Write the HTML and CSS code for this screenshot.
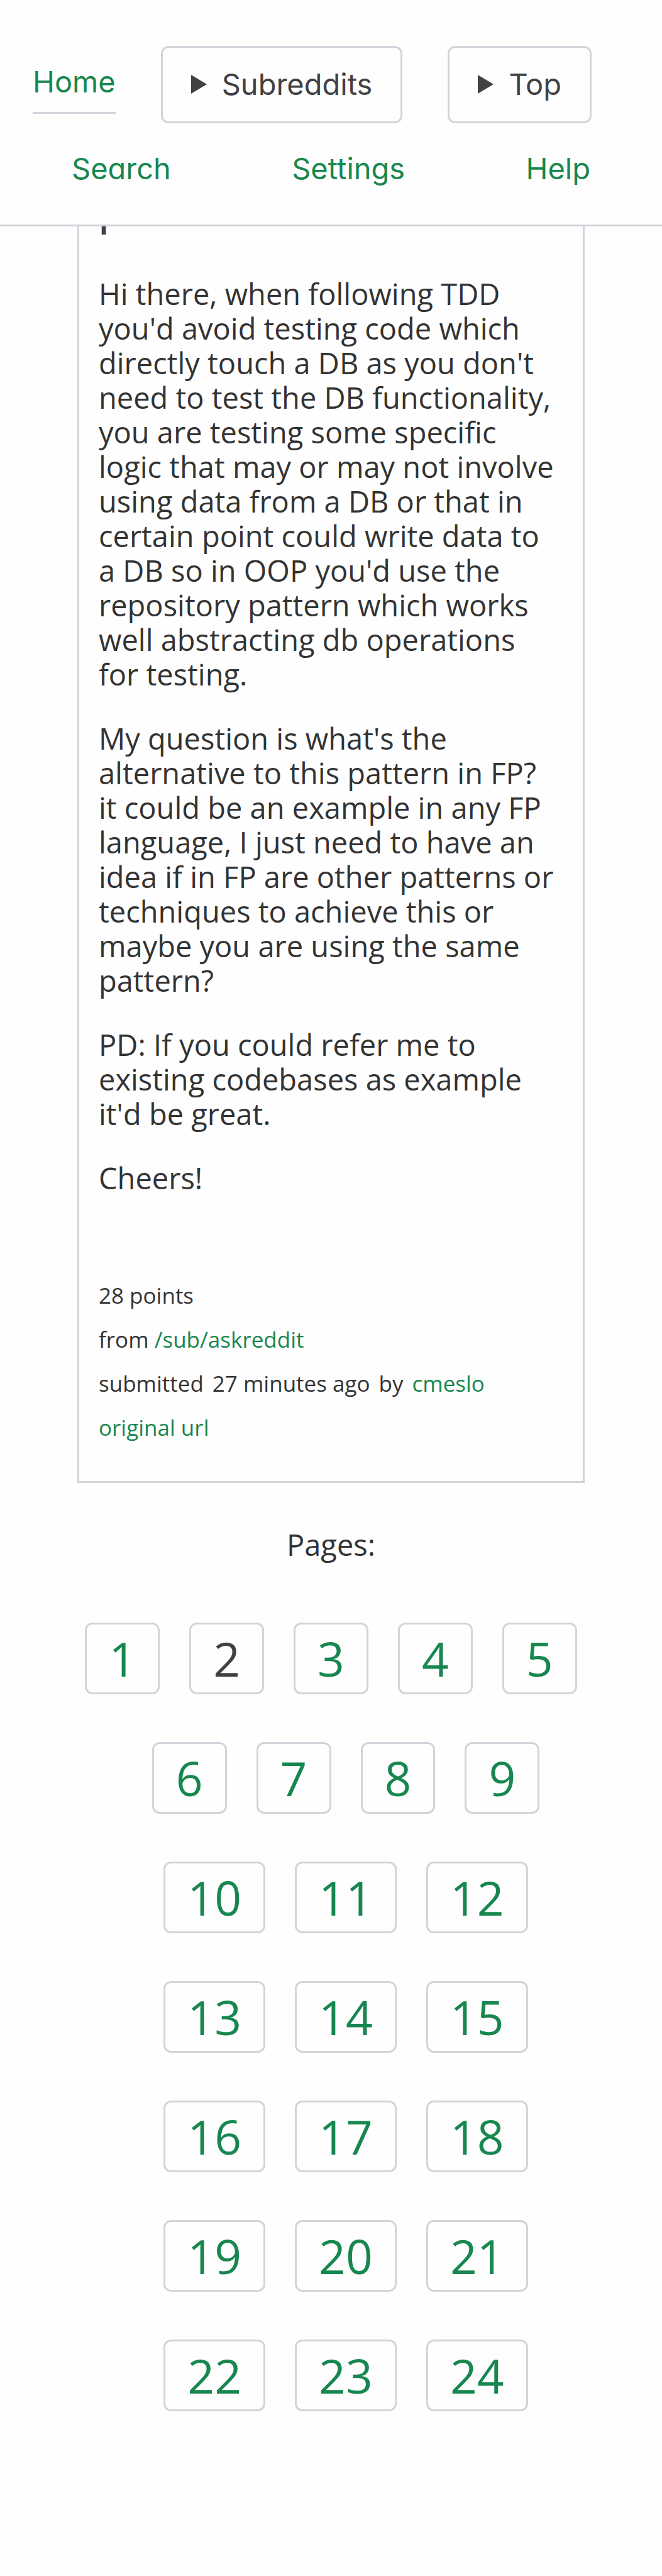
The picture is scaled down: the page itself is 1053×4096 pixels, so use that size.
FILE: index.html
```html
<!DOCTYPE html>
<html lang="en">
<head>
<meta charset="utf-8">
<meta name="viewport" content="width=device-width, initial-scale=1">
<title>Home</title>
<link rel="stylesheet" href="styles.css">
</head>
<body>
<header class="site-header">
  <nav class="nav">
    <div class="nav-row nav-row-main">
      <a class="nav-link nav-link-active" href="#home">Home</a>
      <details class="menu">
        <summary class="menu-label"><svg class="arrow" viewBox="0 0 25 30" aria-hidden="true"><path d="M0 0L25 15L0 30Z"/></svg>Subreddits</summary>
      </details>
      <details class="menu">
        <summary class="menu-label"><svg class="arrow" viewBox="0 0 25 30" aria-hidden="true"><path d="M0 0L25 15L0 30Z"/></svg>Top</summary>
      </details>
    </div>
    <div class="nav-row nav-row-more">
      <a class="nav-link" href="#search">Search</a>
      <a class="nav-link" href="#settings">Settings</a>
      <a class="nav-link" href="#help">Help</a>
    </div>
  </nav>
</header>
<main class="content">
  <article class="post">
    <h2 class="post-title">p</h2>
    <div class="post-body">
      <p>Hi there, when following TDD you'd avoid testing code which directly touch a DB as you don't need to test the DB functionality, you are testing some specific logic that may or may not involve using data from a DB or that in certain point could write data to a DB so in OOP you'd use the repository pattern which works well abstracting db operations for testing.</p>
      <p>My question is what's the alternative to this pattern in FP? it could be an example in any FP language, I just need to have an idea if in FP are other patterns or techniques to achieve this or maybe you are using the same pattern?</p>
      <p>PD: If you could refer me to existing codebases as example it'd be great.</p>
      <p>Cheers!</p>
    </div>
    <ul class="post-meta">
      <li>28 points</li>
      <li>from <a href="#askreddit">/sub/askreddit</a></li>
      <li class="post-author"><span>submitted</span><span>27 minutes ago</span><span>by</span><a href="#cmeslo">cmeslo</a></li>
      <li><a href="#original">original url</a></li>
    </ul>
  </article>
  <nav class="pager" aria-labelledby="pages-label">
    <p class="pager-label" id="pages-label">Pages:</p>
    <ul class="pager-list">
      <li><a href="#1">1</a></li>
      <li><a class="current" href="#2" aria-current="page">2</a></li>
      <li><a href="#3">3</a></li>
      <li><a href="#4">4</a></li>
      <li><a href="#5">5</a></li>
      <li><a href="#6">6</a></li>
      <li><a href="#7">7</a></li>
      <li><a href="#8">8</a></li>
      <li><a href="#9">9</a></li>
      <li><a href="#10">10</a></li>
      <li><a href="#11">11</a></li>
      <li><a href="#12">12</a></li>
      <li><a href="#13">13</a></li>
      <li><a href="#14">14</a></li>
      <li><a href="#15">15</a></li>
      <li><a href="#16">16</a></li>
      <li><a href="#17">17</a></li>
      <li><a href="#18">18</a></li>
      <li><a href="#19">19</a></li>
      <li><a href="#20">20</a></li>
      <li><a href="#21">21</a></li>
      <li><a href="#22">22</a></li>
      <li><a href="#23">23</a></li>
      <li><a href="#24">24</a></li>
    </ul>
  </nav>
</main>
</body>
</html>
```
FILE: styles.css
```css
* { box-sizing: border-box; margin: 0; padding: 0; }
body {
  background: #fefefe;
  color: #333;
  font: 47px/55px "Open Sans", sans-serif;
}
a { color: #17874f; text-decoration: none; }
ul { list-style: none; }

.site-header {
  position: relative;
  z-index: 1;
  background: #fefefe;
  border-bottom: 3px solid #d1d5db;
  padding: 73px 52px 62px;
  font: 47px/55px Inter, sans-serif;
  font-feature-settings: "cv11";
}
.nav { display: flex; flex-direction: column; gap: 44px; }
.nav-row { display: flex; }
.nav-row-main { align-items: center; gap: 72px; }
.nav-row-more { justify-content: space-between; padding: 0 62px; }
.nav-link-active { border-bottom: 3px solid #d1d5db; padding: 14px 0 21px; }
.menu { border: 3px solid #d1d5db; border-radius: 12px; }
.menu-label {
  display: flex;
  align-items: center;
  gap: 24px;
  list-style: none;
  padding: 30px 45px 32px;
  color: #414144;
}
.arrow { width: 25px; height: 30px; fill: #414144; }

.content { padding: 0 123px 160px; }
.post {
  border: 3px solid #d1d5db;
  border-top: 0;
  padding: 0 31px 50px;
}
.post-title {
  color: #414144;
  font-size: 58px;
  font-weight: 600;
  line-height: 70px;
  margin-top: -58px;
}
.post-body { display: flex; flex-direction: column; gap: 47px; padding: 68px 8px 0 0; }
.post-meta { padding-top: 124px; font-size: 35px; line-height: 70px; }
.post-author { display: flex; gap: 14px; }

.pager-label { text-align: center; padding: 71px 0 96px; }
.pager-list { display: flex; flex-wrap: wrap; justify-content: center; row-gap: 76px; }
.pager-list li + li { margin-left: 47px; }
.pager-list a {
  display: block;
  border: 3px solid #d1d5db;
  border-radius: 12px;
  padding: 4px 35px;
  font-size: 75px;
  line-height: 100px;
}
.pager-list .current { color: #414144; }
```
